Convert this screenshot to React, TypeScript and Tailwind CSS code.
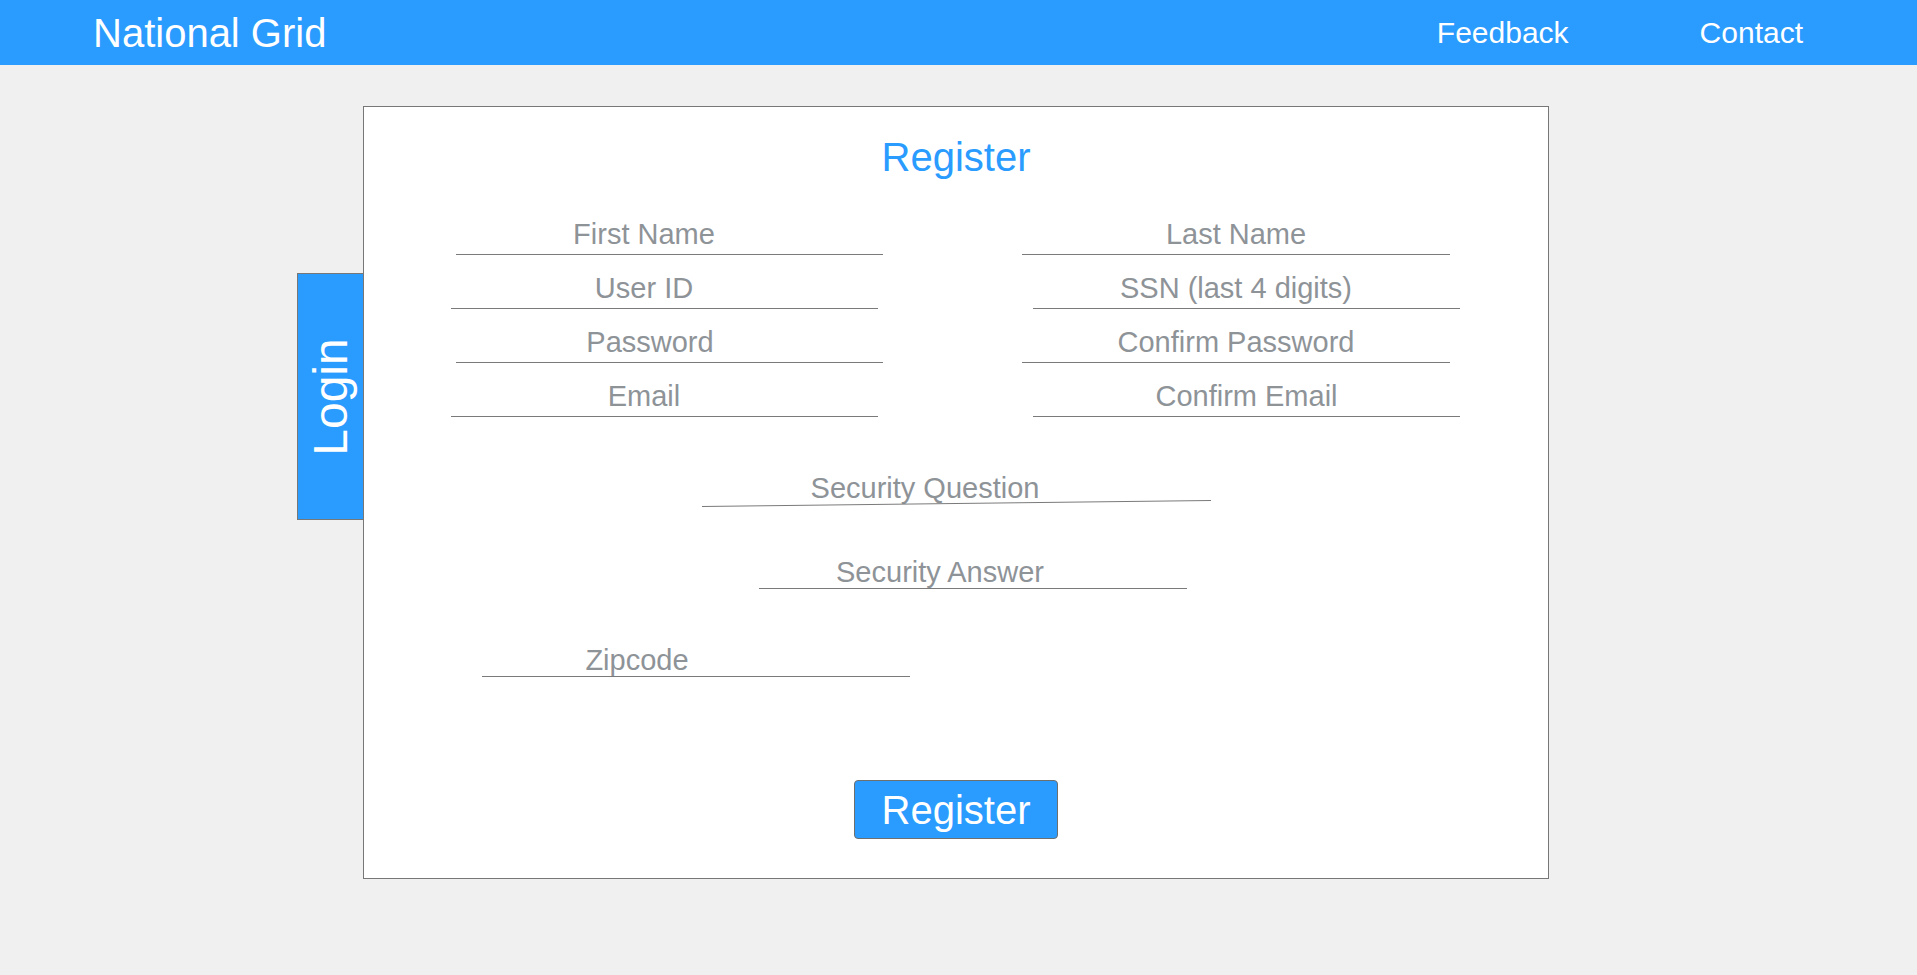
import React from "react";

type FieldProps = {
  label: string;
  width: string;
  shift?: string;
  className?: string;
  gap?: string;
};

function Field({ label, width, shift = "", className = "", gap = "mb-[4px]" }: FieldProps) {
  return (
    <div className={`flex flex-col ${width} ${className}`}>
      <div className={`text-center text-[29px] leading-[32px] text-[#8e9398] ${gap} ${shift}`}>{label}</div>
      <div className="h-px w-full bg-[#7a7a7a]" />
    </div>
  );
}

export default function App() {
  return (
    <div
      className="min-h-[975px] w-full bg-[#f0f0f0]"
      style={{ fontFamily: '"Liberation Sans", Arial, sans-serif' }}
    >
      <header className="flex h-[65px] items-center bg-[#2a9bff] pl-[93px] pr-[114px] text-white">
        <div className="text-[40px] leading-[48px]">National Grid</div>
        <nav className="ml-auto flex items-center gap-[131px] text-[30px] leading-[36px]">
          <span>Feedback</span>
          <span>Contact</span>
        </nav>
      </header>

      <div className="relative ml-[363px] mt-[41px] flex h-[773px] w-[1186px] flex-col border border-[#777777] bg-white">
        <div className="absolute left-[-67px] top-[166px] flex h-[247px] w-[67px] items-center justify-center border border-[#777777] bg-[#2a9bff]">
          <span className="-rotate-90 whitespace-nowrap text-[48px] leading-[48px] text-white">Login</span>
        </div>

        <h1 className="mt-[26px] text-center text-[40px] leading-[48px] text-[#2a9bff]">Register</h1>

        <div className="mt-[37px] flex flex-col gap-[17px]">
          <div className="flex">
            <Field label="First Name" width="w-[427px]" shift="pr-[51px]" className="ml-[92px]" />
            <Field label="Last Name" width="w-[428px]" className="ml-[139px]" />
          </div>
          <div className="flex">
            <Field label="User ID" width="w-[427px]" shift="pr-[41px]" className="ml-[87px]" />
            <Field label="SSN (last 4 digits)" width="w-[427px]" shift="pr-[21px]" className="ml-[155px]" />
          </div>
          <div className="flex">
            <Field label="Password" width="w-[427px]" shift="pr-[39px]" className="ml-[92px]" />
            <Field label="Confirm Password" width="w-[428px]" className="ml-[139px]" />
          </div>
          <div className="flex">
            <Field label="Email" width="w-[427px]" shift="pr-[41px]" className="ml-[87px]" />
            <Field label="Confirm Email" width="w-[427px]" className="ml-[155px]" />
          </div>
        </div>

        <div className="mt-[55px] flex w-[509px] flex-col self-center">
          <div className="pr-[62px] text-center text-[29px] leading-[32px] text-[#8e9398]">Security Question</div>
          <svg className="mt-[-4px] block" width="509" height="8" viewBox="0 0 509 8">
            <line x1="0" y1="6.5" x2="509" y2="0.5" stroke="#7a7a7a" strokeWidth="1" />
          </svg>
        </div>

        <Field label="Security Answer" width="w-[428px]" shift="pr-[66px]" gap="mb-0" className="ml-[395px] mt-[48px]" />

        <Field label="Zipcode" width="w-[428px]" shift="pr-[118px]" gap="mb-0" className="ml-[118px] mt-[55px]" />

        <button className="mt-[103px] flex h-[59px] w-[204px] items-center justify-center self-center rounded-[4px] border border-[#6f6f6f] bg-[#2a9bff] text-[40px] leading-[48px] text-white">
          Register
        </button>
      </div>
    </div>
  );
}
